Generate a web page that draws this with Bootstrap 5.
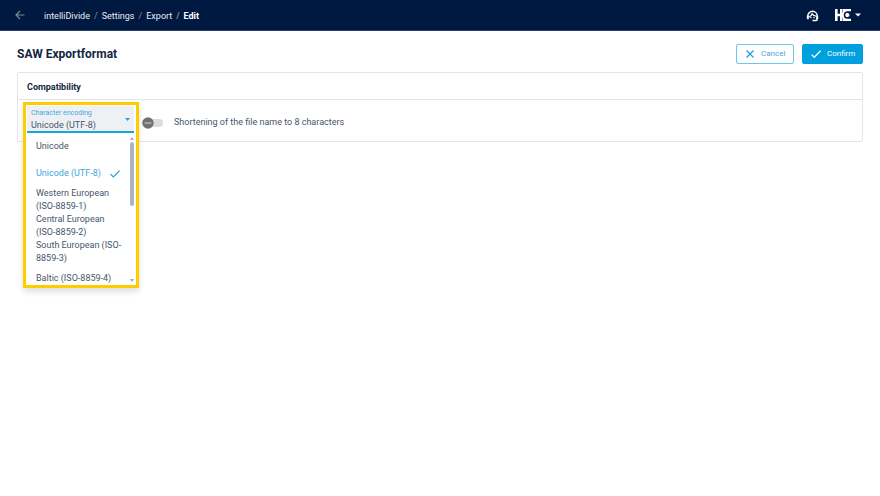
<!DOCTYPE html>
<html lang="en">
<head>
<meta charset="utf-8">
<meta name="viewport" content="width=device-width, initial-scale=1">
<title>SAW Exportformat</title>
<link href="https://cdn.jsdelivr.net/npm/bootstrap@5.3.0/dist/css/bootstrap.min.css" rel="stylesheet">
<style>
  body { font-family: Roboto, "Liberation Sans", sans-serif; font-size: 9px; line-height: 13px; color: #46566b; background: #fff; }
  svg { display: block; flex: none; }
  .topbar { height: 31px; padding: 0 19px 0 14px; background: #001941; border-bottom: 1px solid #2f4266; }
  .back-link { color: #7d8696; margin-right: 18px; }
  .crumbs { --bs-breadcrumb-divider-color: #8490a5; --bs-breadcrumb-item-padding-x: 4px; --bs-breadcrumb-item-active-color: #fff; font-size: 9px; line-height: 13px; padding-top: 2px; }
  .crumbs a { color: #e9edf3; text-decoration: none; }
  .icon-btn { background: none; border: 0; padding: 0; color: #fff; }
  .topbar-tools { gap: 16px; }
  .page { padding: 13px 17px 0; }
  .page-title { font-size: 12px; line-height: 20px; font-weight: 700; color: #14263f; margin: 0; }
  .action-btn { --bs-btn-font-size: 8px; --bs-btn-border-radius: 2px; --bs-btn-padding-x: 8px; --bs-btn-padding-y: 0; height: 20px; gap: 6px; }
  .btn-cancel { --bs-btn-color: #3fa9dc; --bs-btn-border-color: #6fc5ea; width: 58px; }
  .btn-confirm { --bs-btn-color: #fff; --bs-btn-bg: #009fdd; --bs-btn-border-color: #009fdd; width: 61px; }
  .panel { --bs-card-border-color: #e3e5e8; --bs-card-border-radius: 2px; margin-top: 8px; }
  .panel-head { padding: 7px 9px 5px; border-bottom: 1px solid #e3e5e8; font-size: 9px; line-height: 14px; font-weight: 700; color: #14263f; }
  .panel-body { height: 41px; padding-left: 124px; padding-top: 4px; }
  .picker { top: 29px; left: 5px; width: 116px; border: 3px solid #fc0; padding: 1px 2px 0 1px; background: #fff; box-shadow: 0 4px 6px rgba(0, 0, 0, .12); z-index: 2; }
  .field { background: #eef0f4; border-bottom: 2px solid #1ba3dc; height: 27px; padding: 2px 4px 0; }
  .field label { display: block; font-size: 7px; line-height: 11px; color: #3fa9dc; }
  .field select { appearance: none; display: block; width: 100%; border: 0; padding: 0; background: none; font-size: 9px; line-height: 12px; color: #46566b; outline: 0; }
  .field-caret { right: 4px; top: 12px; pointer-events: none; }
  .options { height: 152px; overflow: hidden; }
  .option { display: flex; align-items: center; width: 100%; min-height: 27px; border: 0; background: none; padding: 0 0 0 9px; text-align: left; color: #46566b; font-size: 9px; line-height: 13px; }
  .option-long { min-height: 26px; }
  .option-on { color: #3fa9dc; gap: 9px; }
  .option-list { width: 97px; }
  .rail { width: 5px; padding: 4px 0 3px; }
  .rail-thumb { width: 4px; height: 64px; border-radius: 2px; background: #aeb4bf; margin-top: 2px; }
  .toggle { width: 21px; height: 12px; }
  .toggle input { appearance: none; display: block; width: 21px; height: 8px; margin: 2px 0; background: #dcdcdc; border-radius: 4px; }
  .toggle svg { left: 0; top: 0; pointer-events: none; }
  .toggle-label { margin-left: 11px; }
</style>
<script src="https://cdn.jsdelivr.net/npm/bootstrap@5.3.0/dist/js/bootstrap.bundle.min.js"></script>
</head>
<body class="min-vh-100">
<header class="topbar d-flex align-items-center">
  <a class="back-link" href="#" aria-label="Back">
    <svg width="12" height="12" viewBox="0 0 12 12" fill="none" stroke="currentColor" stroke-width="1.2"><path d="M10.500 6H2M6 2 2 6l4 4"/></svg>
  </a>
  <nav aria-label="breadcrumb">
    <ol class="breadcrumb crumbs mb-0">
      <li class="breadcrumb-item"><a href="#">intelliDivide</a></li>
      <li class="breadcrumb-item"><a href="#">Settings</a></li>
      <li class="breadcrumb-item"><a href="#">Export</a></li>
      <li class="breadcrumb-item active fw-bold" aria-current="page">Edit</li>
    </ol>
  </nav>
  <div class="topbar-tools d-flex align-items-center ms-auto">
    <button class="icon-btn" type="button" aria-label="Support">
      <svg width="13" height="13" viewBox="0 0 13 13" fill="none" stroke="currentColor"><path stroke-width="1.500" d="M1.800 8.500V7a4.700 4.700 0 0 1 9.400 0v2.700q0 1.800-1.300 1.800H6.500"/><path stroke-width="1.300" d="M3.200 7.800Q5.500 7 6.100 4.900q1.200 2.100 3.800 2.200"/><path fill="currentColor" stroke="none" d="M.8 6.800h2v3.500H2q-1.200 0-1.200-1zM10.200 6.800h2v3.500h-2zM4.300 8h1.200v1.200H4.300zM7.400 8h1.200v1.200H7.400z"/></svg>
    </button>
    <button class="icon-btn d-flex align-items-center gap-1" type="button" aria-label="Account">
      <svg width="16" height="12" viewBox="0 0 16 12"><path fill="#fff" d="M0 0h2.600v4.800H5V0h11v12H5V7.200H2.600V12H0z"/><path fill="none" stroke="#001941" stroke-width="1.500" d="M16 2.900h-3.400a3.100 3.100 0 0 0 0 6.200H16"/><path fill="#001941" d="M12.600 2.900H16v6.200h-3.400z"/><circle cx="12.600" cy="6" r="1.900" fill="#fff"/><path fill="#001941" d="M7.300 0h.7v3.500h-.7zM7.300 8.500h.7V12h-.7z" opacity=".6"/></svg>
      <svg width="6" height="4" viewBox="0 0 6 4"><path fill="#fff" d="M0 .5h6L3 3.500z"/></svg>
    </button>
  </div>
</header>

<main class="page">
  <div class="d-flex align-items-center justify-content-between">
    <h1 class="page-title">SAW Exportformat</h1>
    <div class="d-flex gap-2">
      <button type="button" class="btn action-btn btn-cancel d-flex align-items-center">
        <svg width="10" height="10" viewBox="0 0 10 10" fill="none" stroke="#1b9cd8" stroke-width="1.200"><path d="m1.500 1.500 7 7m0-7-7 7"/></svg>Cancel
      </button>
      <button type="button" class="btn action-btn btn-confirm d-flex align-items-center">
        <svg width="10" height="10" viewBox="0 0 10 10" fill="none" stroke="currentColor" stroke-width="1.300"><path d="m.6 5.600 2.700 2.700L9.600 1.800"/></svg>Confirm
      </button>
    </div>
  </div>

  <section class="card panel position-relative">
    <h2 class="panel-head mb-0">Compatibility</h2>
    <div class="panel-body d-flex align-items-center">
      <div class="toggle position-relative">
        <input type="checkbox" role="switch" id="shorten">
        <svg class="position-absolute" width="12" height="12" viewBox="0 0 12 12"><circle cx="6" cy="6" r="5.700" fill="#717171"/><path stroke="#d5d5d5" stroke-width="1" d="M2.500 6h7"/></svg>
      </div>
      <label class="toggle-label" for="shorten">Shortening of the file name to 8 characters</label>
    </div>

    <div class="picker position-absolute">
      <div class="field position-relative">
        <label for="encoding">Character encoding</label>
        <select id="encoding"><option>Unicode (UTF-8)</option></select>
        <svg class="field-caret position-absolute" width="5" height="3" viewBox="0 0 5 3"><path fill="#1ba3dc" d="M0 0h5L2.500 3z"/></svg>
      </div>
      <div class="options d-flex justify-content-between">
        <div class="option-list" role="listbox" aria-label="Character encoding">
          <button type="button" role="option" class="option">Unicode</button>
          <button type="button" role="option" aria-selected="true" class="option option-on">Unicode (UTF-8)
            <svg width="10" height="10" viewBox="0 0 10 10" fill="none" stroke="#1ba3dc" stroke-width="1.200"><path d="m.6 5.200 2.700 2.700L9.600 1.600"/></svg>
          </button>
          <button type="button" role="option" class="option option-long">Western European (ISO-8859-1)</button>
          <button type="button" role="option" class="option option-long">Central European (ISO-8859-2)</button>
          <button type="button" role="option" class="option option-long">South European (ISO-8859-3)</button>
          <button type="button" role="option" class="option">Baltic (ISO-8859-4)</button>
        </div>
        <div class="rail d-flex flex-column align-items-center" aria-hidden="true">
          <svg width="4" height="3" viewBox="0 0 4 3"><path fill="#a5abb5" d="M0 3h4L2 0z"/></svg>
          <div class="rail-thumb"></div>
          <svg class="mt-auto" width="4" height="3" viewBox="0 0 4 3"><path fill="#a5abb5" d="M0 0h4L2 3z"/></svg>
        </div>
      </div>
    </div>
  </section>
</main>
</body>
</html>
